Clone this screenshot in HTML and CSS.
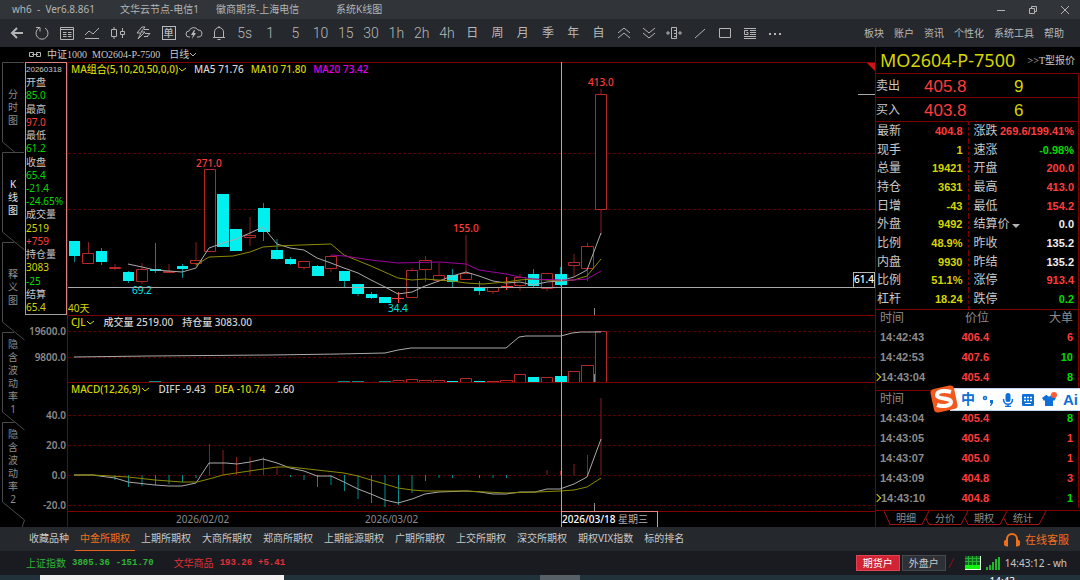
FILE: index.html
```html
<!DOCTYPE html>
<html lang="zh-CN">
<head>
  <meta charset="UTF-8">
  <meta name="viewport" content="width=device-width, initial-scale=1.0">
  <title>系统K线图</title>
  <link rel="stylesheet" href="styles.css">
</head>
<body>

  <header class="titlebar">
    <span class="app-name">wh6&nbsp; -&nbsp; Ver6.8.861</span>
    <span class="node">文华云节点-电信1</span>
    <span class="broker">徽商期货-上海电信</span>
    <span>系统K线图</span>
    <div class="window-buttons">
      <button aria-label="最小化"><svg width="10" height="10"><path d="M1 5.500h8"/></svg></button>
      <button aria-label="还原"><svg width="10" height="10"><path d="M1.500 3.500h5v5h-5zM3.500 3V1.500h5v5H7"/></svg></button>
      <button aria-label="关闭"><svg width="10" height="10"><path d="M1 1l8 8M9 1l-8 8"/></svg></button>
    </div>
  </header>

  <div class="toolbar">
    <div class="tools">
      <button aria-label="返回"><svg width="16" height="16"><path class="thick" d="M14 8H3M8 3L3 8l5 5"/></svg></button>
      <button aria-label="刷新"><svg width="16" height="16"><path d="M5 3a6 6 0 1 0 6 0M2 2.500h4v4"/></svg></button>
      <button aria-label="报价"><svg width="16" height="16"><path d="M1.500 2.500h13v12h-13zM1.500 4.500h13M4 7.500h3.500M9 7.500h3.500M4 9.500h3.500M9 9.500h3.500M4 11.500h3.500M9 11.500h3.500"/></svg></button>
      <button aria-label="分时图"><svg width="16" height="16"><path d="M1 10l4-4 4 3 6-6M1 13.500h14"/></svg></button>
      <button aria-label="K线图"><svg width="16" height="16"><path d="M1.500 4.500h5v7h-5zM4 2v2.500M4 11.500V14M10.500 6.500h4v3h-4zM12.500 3v3.500M12.500 9.500V13"/></svg></button>
      <button aria-label="闪电下单"><svg width="16" height="16"><path d="M7 2L2 8h4l-3 6 7-7H6l4-5zM9 4.500h5M10 8.500h5l-3 3M9 11.500h4"/></svg></button>
      <button aria-label="下单" class="boxed">单</button>
      <button aria-label="云下单"><svg width="18" height="16"><path d="M5 12H4a3 3 0 0 1 0-6 5 5 0 0 1 9-1 3.500 3.500 0 0 1 1 7h-2"/><path class="solid" d="M9 5L6 10h2l-1 4 4-6H9l1-3z"/></svg></button>
      <button aria-label="预警"><svg width="16" height="16"><path d="M2 12.500h12M3.500 12V7a4.500 4.500 0 0 1 9 0v5M8 1v2M6.500 14.500h3"/></svg></button>
      <button>5s</button>
      <button>1</button>
      <button>5</button>
      <button>10</button>
      <button>15</button>
      <button>30</button>
      <button>1h</button>
      <button>2h</button>
      <button>4h</button>
      <button class="han">日</button>
      <button class="han">周</button>
      <button class="han">月</button>
      <button class="han">季</button>
      <button class="han">年</button>
      <button class="han">自</button>
      <button aria-label="放大"><svg width="16" height="16"><path d="M2 8l6-5 6 5M2 13l6-5 6 5"/></svg></button>
      <button aria-label="缩小"><svg width="16" height="16"><path d="M2 3l6 5 6-5M2 8l6 5 6-5"/></svg></button>
      <button aria-label="区间"><svg width="18" height="16"><path d="M6.500 2.500h5v11h-5zM9 5.500h2M9 8.500h2M9 11.500h2M1 8h4M3 6v4M13 8h4M15 6v4"/></svg></button>
      <button aria-label="画线"><svg width="16" height="16"><path d="M3 13L13 4"/></svg></button>
      <button aria-label="矩形"><svg width="16" height="16"><path d="M2.500 3.500h11v9h-11z"/></svg></button>
      <button aria-label="资讯列表"><svg width="16" height="16"><path d="M2 3.500h12M8 5.500h6M8 7.500h6M8 9.500h6M2 11.500h12M2 13.500h12M6 5.500H2.500v4H6v-2H4.500"/></svg></button>
      <button aria-label="更多"><svg width="16" height="16"><path class="thick" d="M2 9h2M7 9h2M12 9h2"/></svg></button>
    </div>
    <nav class="menu">
      <a href="#">板块</a>
      <a href="#">账户</a>
      <a href="#">资讯</a>
      <a href="#">个性化</a>
      <a href="#">系统工具</a>
      <a href="#">帮助</a>
    </nav>
  </div>

  <main class="workspace">
    <section class="left">
      <div class="symbol-row">
        <svg width="14" height="8"><path d="M5.500 1.500h-4v4h4zM8.500 1.500h4v4h-4zM4 3.500h6"/></svg>
        <span>中证1000&nbsp; MO2604-P-7500</span>
        <button>日线<svg width="8" height="6"><path d="M1 1l3 3 3-3"/></svg></button>
      </div>

      <div class="chart-area">
        <div class="side-tabs">
          <button>
            <svg width="22" height="90"><path d="M22 .5H.500V80l12 10"/></svg>
            分<br>时<br>图
          </button>
          <button class="active">
            <svg width="22" height="90"><path d="M22 .5H.500V80l22 18"/></svg>
            K<br>线<br>图
          </button>
          <button>
            <svg width="22" height="90"><path d="M12 .5H.500V80l22 18"/></svg>
            释<br>义<br>图
          </button>
          <button>
            <svg width="22" height="90"><path d="M12 .5H.500V80l22 18"/></svg>
            隐<br>含<br>波<br>动<br>率<br>1
          </button>
          <button>
            <svg width="22" height="90"><path d="M12 .5H.500V80l22 18-3 9"/></svg>
            隐<br>含<br>波<br>动<br>率<br>2
          </button>
        </div>

        <div class="day-info">
          <span class="date">20260318</span>
          <span>开盘</span><span class="green">85.0</span>
          <span>最高</span><span class="red">97.0</span>
          <span>最低</span><span class="green">61.2</span>
          <span>收盘</span><span class="green">65.4</span>
          <span class="green">-21.4</span>
          <span class="green">-24.65%</span>
          <span>成交量</span><span class="yellow">2519</span>
          <span class="red">+759</span>
          <span>持仓量</span><span class="yellow">3083</span>
          <span class="green">-25</span>
          <span>结算</span><span class="yellow">65.4</span>
        </div>

        <!-- K line -->
        <div class="plot">
          <svg class="canvas" height="252">
            <g transform="translate(-68 -63)">
              <path class="grid" d="M68 153.500H2000M68 209.500H2000"/>
              <path class="up-wick" d="M88.500 242v11M115 264v6M142 263v7M142 282v2M169 264v8M196 242v18M196 264v2M250 217v18M250 238v8M304 268v2M331 255v2M331 269v3M412 268v2M425.500 256v4M425.500 270v12M439 263v12M466 235v38M493 292v2M520 274v3M520 286v5M547 289v2M574 254v8M574 266v11M587.500 243v3M587.500 269v12M601 89v5M601 210v25"/>
              <path class="up" d="M82.500 253.500h11v10h-11zM109.500 267.500h11v1h-11zM136.500 269.500h11v12h-11zM163.500 271.500h11v1h-11zM190.500 260.500h11v3h-11zM204.500 169.500h11v82h-11zM244.500 235.500h11v2h-11zM298.500 261.500h11v6h-11zM325.500 256.500h11v12h-11zM406.500 270.500h11v27h-11zM419.500 260.500h12v9h-12zM433.500 275.500h11v5h-11zM460.500 273.500h11v6h-11zM487.500 287.500h11v4h-11zM514.500 277.500h11v8h-11zM541.500 273.500h11v15h-11zM568.500 262.500h11v3h-11zM581.500 246.500h12v22h-12zM595.500 94.500h11v115h-11z"/>
              <path class="cross" d="M392 298.500h12M398.500 292v11M501 286.500h12M506.500 277v13"/>
              <path class="down-wick" d="M74.500 241v21M101.500 248v17M128.500 271v12M155.500 243v30M182.500 264v14M263.500 203v38M277 239v21M290.500 257v8M317.500 265v11M344.500 271v16M358 284v12M371.500 292v7M452.500 269v18M479.500 281v14M533.500 269v18M560.500 267v19"/>
              <path class="down" d="M69 241h11v15h-11zM96 251h11v11h-11zM123 272h11v9h-11zM150 269h11v2h-11zM177 266h11v3h-11zM217 194h12v53h-12zM230 229h12v22h-12zM258 208h12v24h-12zM271 250h12v9h-12zM285 259h11v5h-11zM312 266h12v10h-12zM339 271h11v10h-11zM352 284h12v10h-12zM366 294h11v4h-11zM379 297h12v6h-12zM447 275h11v7h-11zM474 287h11v4h-11zM528 274h11v12h-11zM555 274h12v11h-12z"/>
              <polyline class="ma5" points="128,264 142,267 155,270 169,271 182,272 196,268 209,248 223,243 236,239 250,233 263,227 277,244 290,248 304,250 317,258 331,263 344,268 358,273 371,280 385,287 398,294 412,292 425,286 439,281 452,276 466,272 479,276 493,281 506,283 520,282 533,285 547,282 560,281 574,277 587,270 601,233"/>
              <polyline class="ma10" points="196,265 209,257 233,256 250,252 263,247 277,246 301,245 331,244 344,255 371,266 398,278 412,280 425,279 452,281 466,283 483,284 506,282 520,280 533,279 547,280 560,281 574,280 587,276 601,259"/>
              <polyline class="ma20" points="331,255 344,256 371,260 398,263 439,262 466,264 479,270 506,274 520,277 533,279 560,280 574,280 587,279 601,271"/>
              <path class="tick" d="M594.500 308v8"/>
              <text class="red" x="196" y="167">271.0</text>
              <text class="red" x="453" y="232">155.0</text>
              <text class="red" x="588" y="86">413.0</text>
              <text class="cyan" x="132" y="294">69.2</text>
              <text class="cyan" x="388" y="312">34.4</text>
              <text class="yellow" x="68" y="312">40天</text>
            </g>
          </svg>
          <div class="legend">
            <button class="yellow">MA组合(5,10,20,50,0,0)<svg width="9" height="6"><path d="M1 1l3 3 4-3"/></svg></button>
            <span>MA5 71.76</span>
            <span class="yellow">MA10 71.80</span>
            <span class="magenta">MA20 73.42</span>
          </div>
          <div class="cross-x"></div>
          <span class="price-tag">61.4</span>
          <div class="last-price"></div>
          <div class="corner"></div>
        </div>

        <!-- volume -->
        <div class="axis">
          <svg width="42" height="67"><text x="41" y="20">19600.0</text><text x="41" y="46">9800.0</text></svg>
        </div>
        <div class="plot">
          <svg class="canvas" height="66">
            <g transform="translate(-68 -316)">
              <path class="grid" d="M68 331.500H2000M68 357.500H2000"/>
              <path class="down-wick" d="M149 381.500h12M338 381.500h12M352 381.500h12M379 381.500h12"/>
              <path class="up" d="M393 382v-1.500h11v1.500M406.500 382v-2.500h11v2.500M419.500 382v-1.500h12v1.500M433.500 382v-1.500h11v1.500M460.500 382v-3.500h11v3.500M487 381.500h12M500.500 382v-1.500h12v1.500M514.500 382v-7.500h11v7.500M541.500 382v-4.500h11v4.500M568.500 382v-10.500h11v10.500M581.500 382v-16.500h12v16.500M595.500 382v-50.500h11v50.500"/>
              <path class="down" d="M447 381h11v1h-11zM474 381h11v1h-11zM528 377h11v5h-11zM555 376h12v6h-12z"/>
              <path class="tick" d="M594.500 374v8"/>
              <polyline class="ma5" points="74,357 148,356 270,355 338,354 385,353 398,350 411,348 506,348 519,337 526,336 561,336 572,333 581,332 601,332"/>
            </g>
          </svg>
          <div class="legend wide">
            <button class="yellow">CJL<svg width="9" height="6"><path d="M1 1l3 3 4-3"/></svg></button>
            <span>成交量 2519.00</span>
            <span>持仓量 3083.00</span>
          </div>
        </div>

        <!-- MACD -->
        <div class="axis">
          <svg width="42" height="129"><text x="41" y="37">40.0</text><text x="41" y="67">20.0</text><text x="41" y="97">0.0</text><text x="41" y="127">-20.0</text></svg>
        </div>
        <div class="plot">
          <svg class="canvas" height="128">
            <g transform="translate(-68 -383)">
              <path class="grid" d="M68 415.500H2000M68 445.500H2000M68 475.500H2000M68 505.500H2000"/>
              <path class="up-wick" d="M209.500 475v-31M223 475v-25M236.500 475v-18M250 475v-18M263.500 475v-18M277 475v-8M547 475v-5M560.500 475v-4M574 475v-11M587.500 475v-20M601 475v-77"/>
              <path class="down-wick" d="M101.500 475v2M115 475v5M128.500 475v12M142 475v11M155.500 475v10M169 475v9M182.500 475v7M196 475v3M290.500 475v2M304 475v5M317.500 475v12M331 475v10M344.500 475v16M358 475v24M371.500 475v28M385 475v32M398.500 475v30M412 475v18M425.500 475v6M439 475v3M452.500 475v3M479.500 475v3M493 475v3M506.500 475v3"/>
              <polyline class="ma5" points="74,475 93,475 107,477 115,478 128,482 155,485 169,486 182,486 196,483 209,463 226,463 237,464 250,462 263,459 277,463 290,468 304,471 317,476 331,476 344,482 358,489 371,494 385,500 398,503 412,499 425,494 439,492 466,491 480,492 493,494 506,494 520,492 535,492 547,489 560,489 574,484 587,477 601,439"/>
              <polyline class="ma10" points="74,475 93,475 128,477 155,480 182,482 197,482 209,479 223,475 236,473 263,469 277,467 290,467 317,470 344,473 358,476 371,480 385,484 398,488 412,490 425,491 466,491 506,493 537,492 560,491 574,490 587,487 601,478"/>
              <path class="tick" d="M594.500 503v8"/>
            </g>
          </svg>
          <div class="legend wide">
            <button class="yellow">MACD(12,26,9)<svg width="9" height="6"><path d="M1 1l3 3 4-3"/></svg></button>
            <span>DIFF -9.43</span>
            <span class="yellow">DEA -10.74</span>
            <span>2.60</span>
          </div>
        </div>

        <div class="axis"></div>
        <div class="plot dates">
          <svg class="canvas" height="15">
            <text x="108" y="11">2026/02/02</text>
            <text x="297" y="11">2026/03/02</text>
          </svg>
          <span class="date-tag">2026/03/18 <i>星期三</i></span>
        </div>
        <div class="cross-y"></div>
      </div>
    </section>

    <aside class="quote">
      <div class="quote-head">
        <h1>MO2604-P-7500</h1>
        <a href="#">&gt;&gt;T型报价</a>
      </div>
      <div class="book"><span>卖出</span><b class="red">405.8</b><b class="yellow">9</b></div>
      <div class="book"><span>买入</span><b class="red">403.8</b><b class="yellow">6</b></div>

      <table class="stats">
        <tr><th>最新</th><td class="red">404.8</td><th>涨跌</th><td class="red">269.6/199.41%</td></tr>
        <tr><th>现手</th><td class="yellow">1</td><th>速涨</th><td class="green">-0.98%</td></tr>
        <tr><th>总量</th><td class="yellow">19421</td><th>开盘</th><td class="red">200.0</td></tr>
        <tr><th>持仓</th><td class="yellow">3631</td><th>最高</th><td class="red">413.0</td></tr>
        <tr><th>日增</th><td class="yellow">-43</td><th>最低</th><td class="red">154.2</td></tr>
        <tr><th>外盘</th><td class="yellow">9492</td><th class="drop">结算价</th><td>0.0</td></tr>
        <tr><th>比例</th><td class="yellow">48.9%</td><th>昨收</th><td>135.2</td></tr>
        <tr><th>内盘</th><td class="yellow">9930</td><th>昨结</th><td>135.2</td></tr>
        <tr><th>比例</th><td class="yellow">51.1%</td><th>涨停</th><td class="red">913.4</td></tr>
        <tr><th>杠杆</th><td class="yellow">18.24</td><th>跌停</th><td class="green">0.2</td></tr>
      </table>

      <table class="ticks">
        <tr><th>时间</th><th>价位</th><th>大单</th></tr>
        <tr><td>14:42:43</td><td class="red">406.4</td><td class="red">6</td></tr>
        <tr><td>14:42:53</td><td class="red">407.6</td><td class="green">10</td></tr>
        <tr class="current"><td>14:43:04</td><td class="red">405.4</td><td class="green">8</td></tr>
      </table>

      <table class="ticks">
        <tr><th>时间</th><th></th><th></th></tr>
        <tr><td>14:43:04</td><td class="red">405.4</td><td class="green">8</td></tr>
        <tr><td>14:43:05</td><td class="red">405.4</td><td class="red">1</td></tr>
        <tr><td>14:43:07</td><td class="red">405.0</td><td class="red">1</td></tr>
        <tr><td>14:43:09</td><td class="red">404.8</td><td class="red">3</td></tr>
        <tr class="current"><td>14:43:10</td><td class="red">404.8</td><td class="green">1</td></tr>
      </table>

      <div class="quote-tabs">
        <button><svg width="46" height="14"><path d="M0 0l6 13.500h32L45 0"/></svg>明细</button>
        <button><svg width="46" height="14"><path d="M3 7l3 6.500h32L45 0"/></svg>分价</button>
        <button><svg width="46" height="14"><path d="M3 7l3 6.500h32L45 0"/></svg>期权</button>
        <button><svg width="46" height="14"><path d="M3 7l3 6.500h32L45 0"/></svg>统计</button>
      </div>

      <!-- input method bar floating over the quote panel -->
      <div class="ime">
        <svg class="ime-logo" width="28" height="28" viewBox="0 0 28 28">
          <rect x="2" y="2" width="24" height="24" rx="4" fill="#f2581d" transform="rotate(-12 14 14)"/>
          <path d="M21 7C14 5 7 6 7 10c0 5 14 2 14 7 0 4-8 5-14 3" fill="none" stroke="#fff" stroke-width="4"/>
        </svg>
        <button>中</button>
        <button aria-label="标点"><svg width="14" height="14"><circle cx="4" cy="5" r="1.500" fill="none" stroke="#0d6fd8" stroke-width="1.500"/><path d="M9 7h3v3l-2 3H9l1-3H9z"/></svg></button>
        <button aria-label="语音"><svg width="14" height="14"><rect x="4.500" y="0" width="5" height="9" rx="2.500"/><path d="M2.500 6c0 7 9 7 9 0M7 11v3M4 13.500h6" fill="none" stroke="#0d6fd8" stroke-width="1.500"/></svg></button>
        <button aria-label="键盘"><svg width="14" height="14"><rect x="1" y="1" width="12" height="12" rx="1"/><path d="M3 4.500h8M3 7.500h8" stroke="#fff" stroke-width="1.500" stroke-dasharray="2 1"/><path d="M4 10.500h6" stroke="#fff"/></svg></button>
        <button aria-label="皮肤"><svg width="16" height="16"><path d="M5 3h1c1 2 3 2 4 0h1l4 3-2 3-1-1v6H4V8L3 9 1 6z"/><circle cx="13" cy="3" r="3" fill="#ff5a36"/></svg></button>
        <button class="ai">Ai</button>
      </div>
    </aside>
  </main>

  <nav class="boards">
    <a href="#">收藏品种</a>
    <a href="#" class="active">中金所期权</a>
    <a href="#">上期所期权</a>
    <a href="#">大商所期权</a>
    <a href="#">郑商所期权</a>
    <a href="#">上期能源期权</a>
    <a href="#">广期所期权</a>
    <a href="#">上交所期权</a>
    <a href="#">深交所期权</a>
    <a href="#">期权VIX指数</a>
    <a href="#">标的排名</a>
    <a href="#" class="service"><svg width="16" height="15"><path d="M3 9V7a5 5 0 0 1 10 0v2M3 8.500c-3 0-3 5 0 5zM13 8.500c3 0 3 5 0 5z"/></svg>在线客服</a>
  </nav>

  <footer class="status">
    <span class="index up-index">上证指数 <b>3805.36</b> <b>-151.70</b></span>
    <span class="index down-index">文华商品 <b>193.26</b> <b>+5.41</b></span>
    <div class="status-right">
      <button class="futures">期货户</button>
      <button>外盘户</button>
      <svg class="slash" width="8" height="12"><path d="M1 11l5-10"/></svg>
      <svg width="16" height="14"><rect width="16" height="14" fill="#e8ffe8"/><rect width="15" height="9" fill="#0c6a17"/><path d="M0 2.500h15M0 5.500h15M3.500 0v9M7.500 0v9M11.500 0v9" stroke="#2fae3c"/><rect y="9" width="15" height="4" fill="#12f312"/></svg>
      <svg class="signal" width="14" height="13"><path d="M0 10h2v3H0zM3 8h2v5H3zM6 5h2v8H6zM9 2h2v11H9zM12 0h2v13h-2z"/></svg>
      <span>14:43:12 - wh</span>
    </div>
  </footer>

  <div class="taskbar">
    <div class="search"></div>
    <div class="task"></div>
    <span class="clock">14:43</span>
  </div>

</body>
</html>
```
FILE: styles.css
```css
* {
  margin: 0;
  padding: 0;
  box-sizing: border-box;
}

body {
  height: 100vh;
  display: flex;
  flex-direction: column;
  overflow: hidden;
  background: #000;
  color: #c8c8c8;
  font-family: "Noto Sans", "Noto Sans CJK SC", sans-serif;
  font-size: 10px;
  line-height: 13px;
}

button {
  background: none;
  border: none;
  color: inherit;
  font: inherit;
  cursor: pointer;
}

a {
  color: inherit;
  text-decoration: none;
}

svg {
  fill: none;
  stroke-width: 1;
}

.red { color: #ff3c3c; fill: #ff3c3c; }
.green { color: #00dc00; }
.yellow { color: #d6d600; fill: #d6d600; }
.magenta { color: #e000e0; }
.cyan { fill: #00e6e6; }

/* Title bar */
.titlebar {
  flex: none;
  height: 19px;
  display: flex;
  align-items: center;
  padding: 0 10px 0 12px;
  background: #313438;
  color: #b4b4b4;
}

.app-name { width: 108px; }
.node { width: 96px; }
.broker { width: 120px; }

.window-buttons {
  display: flex;
  gap: 22px;
  margin-left: auto;
}

.window-buttons button {
  height: 10px;
  line-height: 0;
}

.window-buttons svg,
.toolbar svg,
.symbol-row svg {
  stroke: #b4b4b4;
}

/* Toolbar */
.toolbar {
  flex: none;
  height: 28px;
  display: flex;
  justify-content: space-between;
  align-items: center;
  padding: 0 16px 0 4px;
  background: #25282c;
  color: #b9b9b9;
}

.tools {
  flex: 0 1 784px;
  display: flex;
}

.tools button {
  flex: 1 1 0;
  height: 24px;
  display: flex;
  justify-content: center;
  align-items: center;
  font-family: Roboto, "Noto Sans CJK SC", sans-serif;
  font-size: 14px;
  font-weight: 300;
}

.tools .han {
  font-size: 12px;
  font-weight: 400;
}

.tools .boxed {
  flex: 0 0 14px;
  height: 14px;
  margin: 5px 6px;
  border: 1px solid #b9b9b9;
  font-size: 10px;
  font-weight: 500;
}

.toolbar .thick { stroke-width: 2; }
.toolbar .solid { fill: #b9b9b9; stroke: none; }

.menu {
  display: flex;
  gap: 10px;
}

/* Workspace */
.workspace {
  flex: 1;
  display: flex;
  min-height: 0;
}

.left {
  flex: 1;
  min-width: 0;
}

.symbol-row {
  height: 15px;
  display: flex;
  align-items: center;
  gap: 5px;
  padding-left: 28px;
  font-family: "Liberation Serif", "Noto Sans CJK SC", serif;
}

.symbol-row button {
  display: flex;
  align-items: center;
  margin-left: 4px;
}

.chart-area {
  position: relative;
  display: grid;
  grid-template-columns: 25px 42px 1fr;
  grid-template-rows: 253px 67px 129px 16px;
}

.side-tabs {
  grid-row: 1 / -1;
  padding-left: 2px;
  overflow: hidden;
}

.side-tabs button {
  position: relative;
  display: block;
  width: 22px;
  height: 90px;
  color: #8c8c8c;
}

.side-tabs .active {
  color: #e6e6e6;
}

.side-tabs svg {
  position: absolute;
  top: 0;
  left: 0;
  overflow: visible;
  stroke: #4a4a4a;
}

.day-info {
  display: flex;
  flex-direction: column;
  justify-content: space-between;
  border: 1px solid #a0a0a0;
  border-top-color: #e08080;
  border-right-color: #e08080;
  overflow: hidden;
}

.day-info .date {
  font-family: "Liberation Sans", sans-serif;
  font-size: 8px;
}

.axis svg {
  display: block;
}

.axis text {
  fill: #8a8a8a;
  font-weight: 600;
  text-anchor: end;
}

.plot {
  position: relative;
  display: grid;
  border-top: 1px solid #800000;
  border-left: 1px solid #800000;
}

.canvas,
.legend {
  grid-area: 1 / 1;
}

.canvas {
  width: 100%;
  overflow: hidden;
}

.canvas .red { font-weight: 500; }
.canvas .grid { stroke: #5a0000; stroke-dasharray: 3 2; }
.canvas .up { fill: #000; stroke: #b42828; }
.canvas .up-wick { stroke: #8c1e1e; }
.canvas .cross { stroke: #ff3c3c; }
.canvas .down { fill: #00f0f0; }
.canvas .down-wick { stroke: #008c8c; }
.canvas .ma5 { stroke: #aaa; }
.canvas .ma10 { stroke: #8c8c00; }
.canvas .ma20 { stroke: #a000a0; }
.canvas .tick { stroke: #8c8c8c; }

.legend {
  position: relative;
  align-self: start;
  display: flex;
  gap: 7px;
  padding-left: 3px;
  font-weight: 500;
  color: #d2d2d2;
}

.legend.wide {
  gap: 9px;
}

.legend button {
  display: flex;
  align-items: center;
}

.legend svg {
  stroke: #d6d600;
}

/* Crosshair and price marks over the plots */
.cross-x,
.cross-y,
.last-price,
.corner,
.price-tag,
.date-tag {
  position: absolute;
}

.cross-x {
  left: 0;
  right: 0;
  bottom: 27px;
  height: 1px;
  background: #aaa;
}

.cross-y {
  left: 561px;
  top: 0;
  bottom: 0;
  width: 1px;
  background: #aaa;
}

.price-tag {
  right: 0;
  bottom: 27px;
  padding: 0 0 1px;
  border: 1px solid #b4b4b4;
  background: #000;
  color: #fff;
  font-weight: 500;
}

.last-price {
  right: 0;
  top: 31px;
  width: 17px;
  height: 1px;
  background: #aaa;
}

.corner {
  right: 0;
  top: 0;
  border-top: 8px solid #d01414;
  border-left: 8px solid transparent;
}

.dates text {
  fill: #8c8c8c;
}

.date-tag {
  left: 493px;
  top: -1px;
  bottom: 0;
  width: 97px;
  border: 1px solid #aaa;
  border-top-color: #e08080;
  border-bottom: none;
  background: #000;
  color: #fff;
  font-weight: 500;
  line-height: 14px;
  white-space: nowrap;
}

.date-tag i {
  color: #b4b4b4;
  font-style: normal;
  font-weight: 400;
}

/* Quote panel */
.quote {
  position: relative;
  flex: 0 0 205px;
  border-left: 1px solid #800000;
  font-family: "Liberation Sans", "Noto Sans CJK SC", sans-serif;
}

.quote-head {
  height: 26px;
  display: flex;
  justify-content: space-between;
  align-items: center;
  padding: 0 5px 0 4px;
  font-family: "Liberation Serif", "Noto Sans CJK SC", serif;
  white-space: nowrap;
}

.quote-head h1 {
  color: #d6d600;
  font-family: "Noto Sans", sans-serif;
  font-size: 18px;
  font-weight: 400;
}

.book {
  height: 24px;
  display: grid;
  grid-template-columns: 48px 90px 1fr;
  align-items: center;
  margin-right: 1px;
  border-top: 1px solid #800000;
  border-right: 1px solid #800000;
  font-size: 12px;
  padding-top: 2px;
}

.book b {
  font-size: 17px;
  font-weight: 400;
}

table {
  width: calc(100% - 1px);
  table-layout: fixed;
  border-collapse: collapse;
  border-top: 1px solid #800000;
  border-right: 1px solid #800000;
}

th {
  font-size: 12px;
  font-weight: 400;
  text-align: left;
  white-space: nowrap;
}

td {
  color: #f0f0f0;
  font-size: 11px;
  font-weight: 700;
  text-align: right;
  white-space: nowrap;
}

td.red { color: #ff3c3c; }
td.green { color: #00dc00; }
td.yellow { color: #d6d600; }

.stats {
  height: 188px;
}

.stats th:first-child {
  width: 32px;
  padding-left: 1px;
}

.stats td:nth-child(2) {
  width: 60px;
  padding-right: 5px;
  border-right: 1px dashed #800000;
}

.stats th:nth-child(3) {
  width: 30px;
  padding-left: 5px;
}

.stats td:nth-child(4) {
  padding-right: 4px;
}

.drop::after {
  content: "";
  display: inline-block;
  margin-left: 2px;
  border: 4px solid transparent;
  border-top-color: #b4b4b4;
  border-bottom: none;
}

.ticks {
  margin-bottom: 2px;
}

.ticks tr {
  height: 20px;
}

.ticks tr:first-child {
  height: 18px;
}

.ticks th {
  color: #8c8c8c;
}

.ticks th:first-child,
.ticks td:first-child {
  width: 62px;
  padding-left: 4px;
  color: #8c8c8c;
  text-align: left;
}

.ticks th:nth-child(2),
.ticks td:nth-child(2) {
  width: 51px;
  text-align: right;
}

.ticks th:last-child,
.ticks td:last-child {
  padding-right: 5px;
  text-align: right;
}

.ticks .current td:first-child {
  padding-left: 0;
}

.ticks .current td:first-child::before {
  content: "";
  display: inline-block;
  width: 5px;
  height: 5px;
  margin: 0 1px 1px -2px;
  border: solid #d6d600;
  border-width: 1px 1px 0 0;
  transform: rotate(45deg);
}

.quote-tabs {
  display: flex;
  padding-left: 8px;
  border-top: 1px solid #800000;
  color: #8c8c8c;
}

.quote-tabs button {
  position: relative;
  width: 39px;
  height: 14px;
  padding-left: 5px;
}

.quote-tabs svg {
  position: absolute;
  top: 0;
  left: 0;
  stroke: #a01414;
}

/* Input method bar */
.ime {
  position: absolute;
  top: 341px;
  right: 0;
  width: 130px;
  height: 23px;
  display: flex;
  justify-content: space-between;
  align-items: center;
  padding: 0 2px 0 10px;
  border: 1px solid #bcd4ec;
  border-right: none;
  background: #fff;
  color: #0d6fd8;
}

.ime svg {
  display: block;
  fill: #0d6fd8;
}

.ime button {
  font-size: 14px;
  font-weight: 700;
}

.ime .ai {
  font-size: 15px;
}

.ime .ime-logo {
  position: absolute;
  left: -21px;
  top: -4px;
}

/* Boards */
.boards {
  flex: none;
  height: 24px;
  display: flex;
  padding: 0 11px 0 24px;
  background: #25282d;
  white-space: nowrap;
}

.boards a {
  padding: 5px;
  margin-right: 1px;
}

.boards .active {
  border-bottom: 1px solid #e8641e;
  color: #f0701e;
}

.boards .service {
  display: flex;
  align-items: center;
  gap: 5px;
  margin: 0 0 0 auto;
  padding: 0;
  color: #f0701e;
  font-size: 11px;
}

.service svg {
  stroke: #f0701e;
  stroke-width: 2;
}

/* Status bar */
.status {
  flex: none;
  height: 24px;
  display: flex;
  align-items: center;
  gap: 20px;
  padding: 0 13px 0 26px;
  background: #1a1b20;
}

.index {
  display: flex;
  gap: 6px;
}

.index b {
  font-family: "Liberation Mono", monospace;
  font-size: 9px;
}

.up-index { color: #30b438; }
.down-index { color: #e03038; }

.status-right {
  display: flex;
  align-items: center;
  gap: 5px;
  margin-left: auto;
}

.status-right button {
  width: 44px;
  height: 16px;
  margin-right: -3px;
  border: 1px solid #45494e;
  background: #2d3136;
  line-height: 14px;
}

.status-right .futures {
  border-color: #e04452;
  background: #d02434;
  color: #fff;
}

.slash {
  margin-right: 4px;
  stroke: #8d1515;
}

.signal {
  fill: #25b52d;
}

/* Taskbar edge */
.taskbar {
  flex: none;
  height: 5px;
  display: flex;
  align-items: flex-start;
  padding: 0 65px 0 40px;
  background: #22323a;
  overflow: hidden;
}

.search {
  width: 244px;
  height: 5px;
  background: #f2f2f2;
}

.task {
  width: 40px;
  height: 5px;
  margin-left: 256px;
  background: #566066;
}

.clock {
  margin-left: auto;
  color: #fff;
}
```
